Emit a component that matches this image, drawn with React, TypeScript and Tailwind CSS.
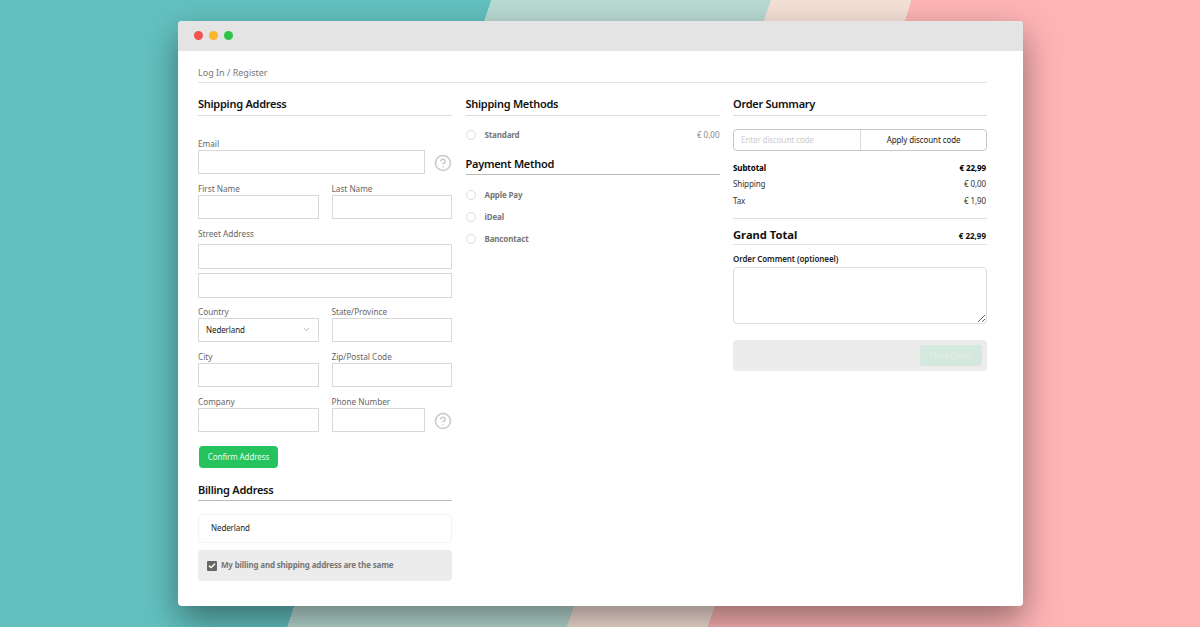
import { ChevronDown, Check, CircleHelp } from "lucide-react";
import type { ReactNode } from "react";

function Heading({ children, strong = false, className = "" }: { children: ReactNode; strong?: boolean; className?: string }) {
  return (
    <div className={`h-[20px] border-b text-[11px] leading-[15px] font-semibold tracking-[-0.27px] text-[#111] ${strong ? "border-[#bbb]" : "border-[#ddd]"} ${className}`}>
      {children}
    </div>
  );
}

function Label({ children }: { children: ReactNode }) {
  return <div className="h-[12px] text-[8.2px] leading-[12px] text-[#666]">{children}</div>;
}

function Input({ className = "" }: { className?: string }) {
  return <input className={`block h-[24px] w-full border border-[#d8d8d8] bg-white outline-none ${className}`} />;
}

function Field({ label, help = false }: { label: string; help?: boolean }) {
  return (
    <div className="min-w-0">
      <Label>{label}</Label>
      <div className="flex items-center">
        <Input />
        {help && <CircleHelp className="mt-[2px] ml-[9px] size-[18px] shrink-0 text-[#c8c8c8]" strokeWidth={2} />}
      </div>
    </div>
  );
}

function Radio({ label, price }: { label: string; price?: string }) {
  return (
    <div className="flex h-full items-center">
      <span className="size-[10px] rounded-full border border-[#ddd]" />
      <span className="ml-[8px] pl-[1px] text-[8px] font-bold tracking-[-0.15px] text-[#777]">{label}</span>
      {price && <span className="ml-auto text-[8px] text-[#888]">{price}</span>}
    </div>
  );
}

function SummaryRow({ label, value, bold = false, className = "" }: { label: string; value: string; bold?: boolean; className?: string }) {
  return (
    <div className={`flex h-[16px] items-center justify-between pr-[1px] text-[8px] tracking-[-0.1px] ${bold ? "font-bold text-black" : "text-[#333]"} ${className}`}>
      <span>{label}</span>
      <span>{value}</span>
    </div>
  );
}

export default function App() {
  return (
    <div className="h-[627px] w-[1200px] overflow-hidden bg-[linear-gradient(108deg,#62c1bf_467px,#b8dad3_467px,#b8dad3_733px,#f5e0d7_733px,#f5e0d7_867px,#feb4b5_867px)] pt-[21px] pl-[178px] font-['Noto_Sans',sans-serif]">
      <div className="h-[585px] w-[845px] overflow-hidden rounded-[4px] bg-white shadow-[0_14px_34px_rgba(0,0,0,0.42)]">
        {/* title bar */}
        <div className="flex h-[30px] items-center gap-[6px] bg-[#e4e4e4] pb-[1px] pl-[16px]">
          <span className="size-[9px] rounded-full bg-[#f0544f]" />
          <span className="size-[9px] rounded-full bg-[#fbb62b]" />
          <span className="size-[9px] rounded-full bg-[#2fc446]" />
        </div>

        <div className="pt-[14px] pr-[36px] pl-[20px]">
          <div className="h-[18px] border-b border-[#e2e2e2] text-[9px] leading-[15px] text-[#777]">Log In / Register</div>

          <div className="mt-[13px] grid grid-cols-3 gap-x-[13.5px]">
            {/* shipping address */}
            <div>
              <Heading>Shipping Address</Heading>
              <div className="mt-[22px]">
                <Field label="Email" help />
              </div>
              <div className="mt-[9px] grid grid-cols-2 gap-x-[13px]">
                <Field label="First Name" />
                <Field label="Last Name" />
              </div>
              <div className="mt-[9px]">
                <Label>Street Address</Label>
                <Input className="mt-[4px] !h-[25px]" />
                <Input className="mt-[4px] !h-[25px]" />
              </div>
              <div className="mt-[8px] grid grid-cols-2 gap-x-[13px]">
                <div>
                  <Label>Country</Label>
                  <div className="flex h-[24px] items-center justify-between border border-[#d8d8d8] pr-[7px] pb-[1px] pl-[7px] text-[8px] tracking-[-0.1px] text-[#222]">
                    Nederland
                    <ChevronDown className="size-[9px] text-[#999]" />
                  </div>
                </div>
                <Field label="State/Province" />
              </div>
              <div className="mt-[9px] grid grid-cols-2 gap-x-[13px]">
                <Field label="City" />
                <Field label="Zip/Postal Code" />
              </div>
              <div className="mt-[9px] grid grid-cols-2 gap-x-[13px]">
                <Field label="Company" />
                <Field label="Phone Number" help />
              </div>
              <button className="mt-[14px] ml-[1px] block h-[22px] w-[79px] rounded-[4px] bg-[#25c35d] text-[8px] tracking-[-0.1px] text-[#e8fbef]">
                Confirm Address
              </button>
              <Heading strong className="mt-[14px] !h-[19px]">Billing Address</Heading>
              <div className="mt-[13px] flex h-[29px] items-center rounded-[4px] border border-[#f3f3f3] pb-[1px] pl-[12px] text-[8px] tracking-[-0.1px] text-[#222]">
                Nederland
              </div>
              <div className="mt-[7px] flex h-[31px] items-center rounded-[4px] bg-[#ececec] pl-[9px]">
                <span className="flex size-[10px] items-center justify-center rounded-[1px] bg-[#666]">
                  <Check className="size-[8px] text-white" strokeWidth={4} />
                </span>
                <span className="ml-[4px] pb-[1px] text-[8px] font-bold tracking-[-0.17px] text-[#777]">My billing and shipping address are the same</span>
              </div>
            </div>

            {/* methods */}
            <div>
              <Heading>Shipping Methods</Heading>
              <div className="mt-[11px] h-[16px]">
                <Radio label="Standard" price="€ 0,00" />
              </div>
              <Heading strong className="mt-[13px] !h-[19px]">Payment Method</Heading>
              <div className="mt-[9px] grid auto-rows-[22px]">
                <Radio label="Apple Pay" />
                <Radio label="iDeal" />
                <Radio label="Bancontact" />
              </div>
            </div>

            {/* order summary */}
            <div>
              <Heading>Order Summary</Heading>
              <div className="mt-[13px] flex h-[22px] rounded-[4px] border border-[#c8c8c8]">
                <div className="flex w-[127px] items-center border-r border-[#d8d8d8] pl-[7px] text-[8px] tracking-[-0.1px] text-[#ccc]">Enter discount code</div>
                <div className="flex flex-1 items-center justify-center text-[8px] tracking-[-0.1px] text-[#222]">Apply discount code</div>
              </div>
              <div className="mt-[9px]">
                <SummaryRow label="Subtotal" value="€ 22,99" bold />
                <SummaryRow label="Shipping" value="€ 0,00" />
                <SummaryRow label="Tax" value="€ 1,90" className="pt-[1px]" />
              </div>
              <div className="mt-[10px] flex h-[27px] items-end justify-between border-y border-t-[#ddd] border-b-[#e4e4e4] pr-[1px] font-bold text-[#111]">
                <span className="text-[11.2px]">Grand Total</span>
                <span className="pb-[2px] text-[8px]">€ 22,99</span>
              </div>
              <div className="mt-[8px] h-[12px] text-[8px] leading-[12px] font-semibold tracking-[-0.1px] text-[#222]">Order Comment (optioneel)</div>
              <textarea className="mt-[2px] block h-[57px] w-full rounded-[4px] border border-[#ddd] outline-none" />
              <div className="mt-[16px] flex h-[31px] items-center justify-end rounded-[4px] bg-[#ececec] pr-[5px]">
                <button className="h-[21px] w-[62px] rounded-[3px] bg-[#d4e8dd] text-[8px] tracking-[-0.1px] text-[#e3eee8]">Place Order</button>
              </div>
            </div>
          </div>
        </div>
      </div>
    </div>
  );
}
